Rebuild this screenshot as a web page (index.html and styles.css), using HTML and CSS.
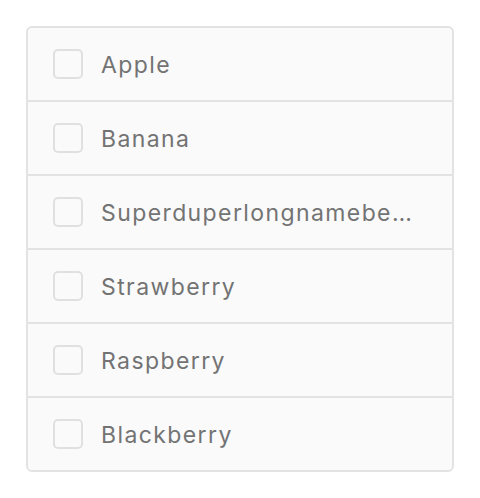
FILE: index.html
```html
<!DOCTYPE html>
<html>
<head>
<meta charset="utf-8">
<link rel="stylesheet" href="styles.css">
</head>
<body>
<ul class="list">
  <li class="row"><span class="box"></span><span class="label">Apple</span></li>
  <li class="row"><span class="box"></span><span class="label">Banana</span></li>
  <li class="row"><span class="box"></span><span class="label">Superduperlongnamebeingtruncated</span></li>
  <li class="row"><span class="box"></span><span class="label">Strawberry</span></li>
  <li class="row"><span class="box"></span><span class="label">Raspberry</span></li>
  <li class="row"><span class="box"></span><span class="label">Blackberry</span></li>
</ul>
</body>
</html>
```
FILE: styles.css
```css
html, body { margin: 0; padding: 0; background: #fff; }
body { padding: 26px; }
.list {
  list-style: none;
  margin: 0;
  padding: 0;
  width: 424px;
  border: 2px solid #e3e3e3;
  border-radius: 6px;
  background: #fafafa;
  font-family: Inter, "Liberation Sans", sans-serif;
}
.row {
  display: flex;
  align-items: center;
  height: 72px;
  padding: 0 36px 0 25px;
  gap: 18px;
}
.row + .row { border-top: 2px solid #e3e3e3; }
.box {
  flex: none;
  width: 26px;
  height: 26px;
  border: 2px solid #e0e0e0;
  border-radius: 5px;
  background: #fafafa;
}
.label {
  flex: 1;
  min-width: 0;
  white-space: nowrap;
  overflow: hidden;
  text-overflow: ellipsis;
  font-size: 23px;
  line-height: 30px;
  padding-top: 2px;
  letter-spacing: 1.4px;
  color: #737373;
}
```
